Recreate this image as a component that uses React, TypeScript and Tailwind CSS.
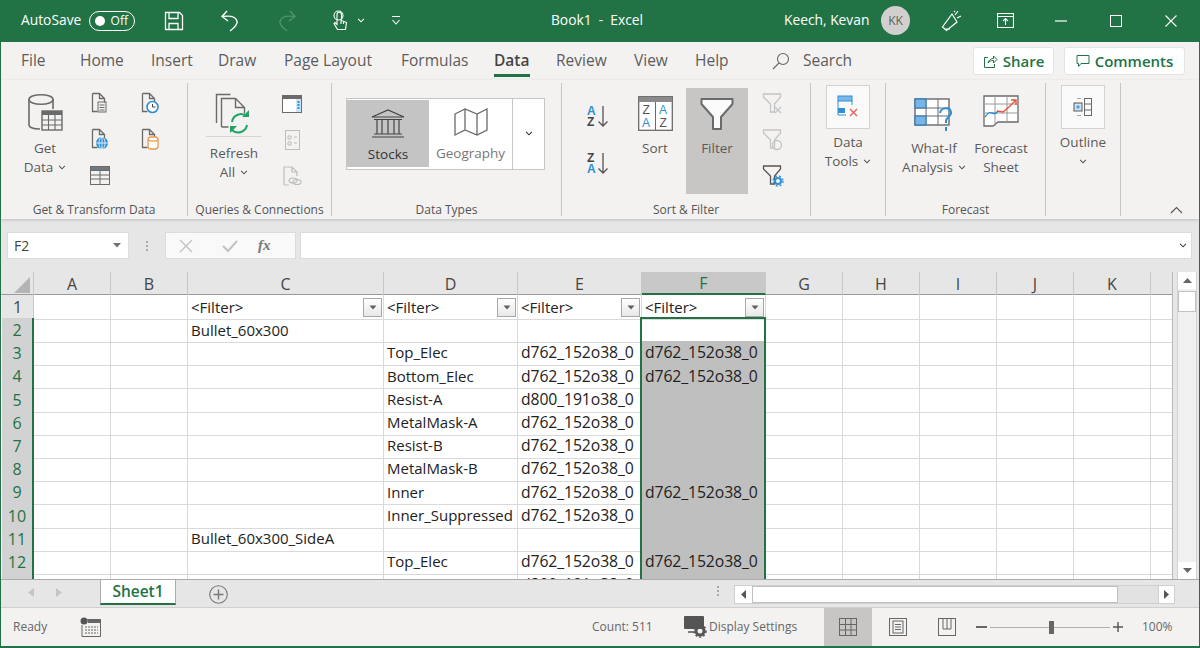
import React from "react";

const G = "#6a6a6a";
const BL = "#2e8fd6";

function Chev({ c = "#555", s = 8 }: { c?: string; s?: number }) {
  return (
    <svg width={s} height={s * 0.6} viewBox="0 0 8 5" className="inline-block">
      <path d="M1 1l3 3 3-3" fill="none" stroke={c} strokeWidth="1.1" />
    </svg>
  );
}

function Doc({ c = G, children }: { c?: string; children?: React.ReactNode }) {
  return (
    <svg width="24" height="24" viewBox="0 0 24 24">
      <path d="M4.5 2.5h7l5 5v4M11.5 2.5v5h5M4.5 2.5v18h5" fill="none" stroke={c} strokeWidth="1.3" />
      {children}
    </svg>
  );
}

function GetDataIcon() {
  return (
    <svg width="38" height="40" viewBox="0 0 38 40">
      <path d="M3 6v26c0 2.5 5 4 11 4M27 6v10" fill="none" stroke={G} strokeWidth="1.6" />
      <ellipse cx="15" cy="6.5" rx="12" ry="4.8" fill="#f3f2f1" stroke={G} strokeWidth="1.6" />
      <rect x="16" y="18" width="20" height="19" fill="#f3f2f1" stroke={G} strokeWidth="1.4" />
      <rect x="16" y="18" width="20" height="4" fill={G} />
      <path d="M16 27h20M16 32h20M22.5 22v15M29 22v15" stroke={G} strokeWidth="1.1" />
    </svg>
  );
}

function RefreshIcon() {
  return (
    <svg width="38" height="42" viewBox="0 0 38 42">
      <path d="M1.5 30V1.5h14" fill="none" stroke={G} strokeWidth="1.4" />
      <path d="M6.5 34V5.5h14l9 9v6M20.5 5.5v9h9M6.5 34h7" fill="#f3f2f1" stroke={G} strokeWidth="1.4" />
      <path d="M17 29a9 9 0 0 1 15-5.5M32 32a9 9 0 0 1-15 5" fill="none" stroke="#21a366" strokeWidth="2" />
      <path d="M34 17v7h-7zM15 40v-7h7z" fill="#21a366" />
    </svg>
  );
}

function FilterFunnel({ s = 34, c = G }: { s?: number; c?: string }) {
  return (
    <svg width={s} height={s} viewBox="0 0 34 34">
      <path d="M1.5 2h31v5L21 20v12h-8V20L1.5 7z" fill="#fbfbfb" stroke={c} strokeWidth="2" strokeLinejoin="round" />
    </svg>
  );
}

function SmallFunnel({ c, children }: { c: string; children?: React.ReactNode }) {
  return (
    <svg width="24" height="24" viewBox="0 0 24 24">
      <path d="M3.5 2h17v3l-6 7v8h-4v-8l-7-7z" fill="none" stroke={c} strokeWidth="1.3" />
      {children}
    </svg>
  );
}

function Sm({ children }: { children: React.ReactNode }) {
  return <div className="flex h-[24px] w-[24px] items-center justify-center">{children}</div>;
}

function Large({ icon, lines, w, top, chev }: { icon: React.ReactNode; lines: string[]; w: string; top: string; chev?: boolean }) {
  return (
    <div className={"flex flex-col items-center " + w}>
      <div className={"flex items-end justify-center " + top}>{icon}</div>
      <div className="text-center text-[13.5px] leading-[19px] whitespace-nowrap text-[#5a5a5a]">
        {lines.map((l, i) => (
          <div key={l} className="flex h-[19px] items-center justify-center">
            {l}
            {chev && i === lines.length - 1 && (
              <span className="ml-[5px] flex">
                <Chev />
              </span>
            )}
          </div>
        ))}
      </div>
    </div>
  );
}

function Group({ w, label, children }: { w: string; label: string; children: React.ReactNode }) {
  return (
    <div className={"flex h-[133px] flex-col border-r border-[#c8c6c4] " + w}>
      <div className="flex min-h-0 flex-1 items-start">{children}</div>
      <div className="h-[20px] pt-[5px] text-center text-[12px] leading-[18px] whitespace-nowrap text-[#555]">{label}</div>
    </div>
  );
}

function BoxBtn({ children }: { children: React.ReactNode }) {
  return <div className="flex h-[44px] w-[44px] items-center justify-center border border-[#d4d2d0] bg-[#fafafa]">{children}</div>;
}

const tabs = ["File", "Home", "Insert", "Draw", "Page Layout", "Formulas", "Data", "Review", "View", "Help"];
const tabW = ["w-[59px]", "w-[71px]", "w-[67px]", "w-[66px]", "w-[117px]", "w-[93px]", "w-[62px]", "w-[78px]", "w-[61px]", "w-[77px]"];

const D = "d762_152o38_0";
const rows: [number, string, string, string, string][] = [
  [2, "Bullet_60x300", "", "", ""],
  [3, "", "Top_Elec", D, D],
  [4, "", "Bottom_Elec", D, D],
  [5, "", "Resist-A", "d800_191o38_0", ""],
  [6, "", "MetalMask-A", D, ""],
  [7, "", "Resist-B", D, ""],
  [8, "", "MetalMask-B", D, ""],
  [9, "", "Inner", D, D],
  [10, "", "Inner_Suppressed", D, ""],
  [11, "Bullet_60x300_SideA", "", "", ""],
  [12, "", "Top_Elec", D, D],
  [13, "", "Resist-A", "d800_191o38_0", ""],
];
const cols = "grid grid-cols-[32px_77px_77px_196px_134px_124px_124px_77px_77px_77px_77px_77px_22px] pl-px";
const gl = "border-r border-b border-[#d9d9d9]";
const num = "text-[15.75px] tracking-[-0.1px]";

function FilterCell() {
  return (
    <div className={"flex items-center justify-between pl-[3px] pr-[1px] " + gl}>
      <span>{"<Filter>"}</span>
      <span className="flex h-[19px] w-[19px] items-center justify-center border border-[#a8a8a8] bg-gradient-to-b from-white to-[#e8e8e8]">
        <svg width="8" height="5" viewBox="0 0 8 5"><path d="M0.5 0.5h7L4 4.5z" fill="#606060" /></svg>
      </span>
    </div>
  );
}

function SortGlyph({ top, bottom }: { top: string; bottom: string }) {
  return (
    <svg className="overflow-visible" width="24" height="23" viewBox="0 0 24 23" fontFamily="'Liberation Sans',sans-serif">
      <text x="1" y="10" fontSize="12" fontWeight="700" fill={top === "A" ? BL : "#444"}>{top}</text>
      <text x="1" y="21" fontSize="12" fontWeight="700" fill={bottom === "A" ? BL : "#444"}>{bottom}</text>
      <path d="M17 1v20M12.5 16.5L17 21l4.5-4.5" fill="none" stroke="#555" strokeWidth="1.3" />
    </svg>
  );
}

export default function App() {
  return (
    <div className="flex h-[648px] w-[1200px] flex-col overflow-hidden border-x border-b-2 border-[#217346] bg-[#e6e6e6] [font-family:'Open_Sans','Noto_Sans',sans-serif]">
      {/* Title bar */}
      <div className="flex h-[42px] shrink-0 items-center bg-[#217346] pb-[1px] text-[13.8px] text-white">
        <span className="ml-[20px] w-[68px]">AutoSave</span>
        <div className="flex h-[20px] w-[46px] items-center justify-between rounded-full border border-white pl-[5px] pr-[6px]">
          <span className="h-[10px] w-[10px] rounded-full bg-white" />
          <span className="text-[12px]">Off</span>
        </div>
        <svg className="ml-[29px]" width="20" height="20" viewBox="0 0 20 20" fill="none" stroke="#fff" strokeWidth="1.3">
          <path d="M1.5 1.5h14l3 3v14h-17z" />
          <path d="M5 1.5v6h9v-6M5 18.5v-6h9v6" />
        </svg>
        <svg className="ml-[36px]" width="20" height="22" viewBox="0 0 20 22" fill="none" stroke="#fff" strokeWidth="1.4">
          <path d="M7 1L2 6.5 8 11M2.5 6.5c7-1 13 0 14.5 4.5 1 3.5-3 7-7 10" />
        </svg>
        <svg className="ml-[37px]" width="20" height="22" viewBox="0 0 20 22" fill="none" stroke="#4d9470" strokeWidth="1.4">
          <path d="M13 1l5 5.5L12 11M17.5 6.5c-7-1-13 0-14.5 4.5-1 3.5 3 7 7 10" />
        </svg>
        <svg className="ml-[36px]" width="15" height="22" viewBox="0 0 15 22" fill="none" stroke="#fff" strokeWidth="1.1">
          <circle cx="5.5" cy="5.5" r="4.5" />
          <path d="M4 4.5v10l-2-2-1 1 3.5 6h8l1-7-5-2V4.5a1 1 0 0 0-4.5 0zM8 10v4M10.5 11v3" />
        </svg>
        <span className="ml-[9px] flex"><Chev c="#fff" /></span>
        <svg className="ml-[26px]" width="10" height="11" viewBox="0 0 10 11" fill="none" stroke="#fff" strokeWidth="1.1">
          <path d="M1 1.5h8M1.5 5l3.5 4 3.5-4" />
        </svg>
        <span className="ml-[146px] w-[100px] text-center whitespace-pre">Book1  -  Excel</span>
        <span className="ml-[137px] w-[86px] whitespace-nowrap">Keech, Kevan</span>
        <span className="ml-[11px] flex h-[29px] w-[29px] items-center justify-center rounded-full bg-[#d2d0ce] text-[12px] text-[#5f5f5f]">KK</span>
        <svg className="ml-[31px]" width="21" height="22" viewBox="0 0 21 22" fill="none" stroke="#fff" strokeWidth="1.2">
          <path d="M11 4L1.5 17l4 3.5L16 12zM3 19h6M14 5l3-4M16 8l4-2M13 2l1-1" />
        </svg>
        <svg className="ml-[35px]" width="17" height="15" viewBox="0 0 17 15" fill="none" stroke="#fff" strokeWidth="1.1">
          <rect x="0.5" y="0.5" width="16" height="14" />
          <path d="M0.5 3.5h16M8.5 12V6M6 8l2.5-2.5L11 8" />
        </svg>
        <svg className="ml-[41px]" width="12" height="2" viewBox="0 0 12 2"><path d="M0 1h12" stroke="#fff" strokeWidth="1.2" /></svg>
        <svg className="ml-[43px]" width="12" height="12" viewBox="0 0 12 12"><rect x="0.5" y="0.5" width="11" height="11" fill="none" stroke="#fff" /></svg>
        <svg className="ml-[43px]" width="12" height="12" viewBox="0 0 12 12"><path d="M0.5 0.5l11 11M11.5 0.5l-11 11" stroke="#fff" strokeWidth="1.1" /></svg>
      </div>

      {/* Tabs */}
      <div className="flex h-[38px] shrink-0 items-center bg-[#f3f2f1] pl-[20px] text-[15.5px] text-[#5c5c5c]">
        {tabs.map((t, i) => (
          <div key={t} className={"relative -mt-[1px] shrink-0 whitespace-nowrap " + tabW[i] + (t === "Data" ? " font-semibold text-[#444]" : "")}>
            {t}
            {t === "Data" && <span className="absolute -bottom-[5px] left-0 h-[3px] w-[36px] bg-[#217346]" />}
          </div>
        ))}
        <svg className="-mt-[1px] shrink-0" width="18" height="18" viewBox="0 0 18 18" fill="none" stroke="#666" strokeWidth="1.1">
          <circle cx="11" cy="7" r="5.5" /><path d="M7 11l-6 6" />
        </svg>
        <span className="-mt-[1px] ml-[13px] w-[170px] shrink-0">Search</span>
        <div className="flex h-[28px] w-[81px] shrink-0 items-center justify-center gap-[5px] rounded-[3px] border border-[#e4e4e4] bg-white text-[15px] font-semibold text-[#217346]">
          <svg width="15" height="15" viewBox="0 0 15 15" fill="none" stroke="#217346" strokeWidth="1">
            <path d="M5 3.5H1.5v10h10V10M5 9c.5-3 3-4.5 5.5-4.5V2L14 5.5 10.5 9V6.5C8 6.5 6 7.5 5 9z" />
          </svg>
          Share
        </div>
        <div className="ml-[10px] flex h-[28px] w-[121px] shrink-0 items-center justify-center gap-[5px] rounded-[3px] border border-[#e4e4e4] bg-white text-[15px] font-semibold text-[#217346]">
          <svg width="14" height="14" viewBox="0 0 14 14" fill="none" stroke="#217346" strokeWidth="1">
            <path d="M1 1.5h12v8H5l-2.5 3v-3H1z" />
          </svg>
          Comments
        </div>
      </div>

      {/* Ribbon */}
      <div className="flex h-[139px] shrink-0 items-start bg-[#f3f2f1] pt-[3px] shadow-[0_1px_3px_rgba(0,0,0,0.18)]">
        <Group w="w-[187px]" label="Get & Transform Data">
          <div className="ml-[19px] flex"><Large w="w-[50px]" top="h-[56px] pb-[6px]" icon={<GetDataIcon />} lines={["Get", "Data"]} chev /></div>
          <div className="ml-[18px] mt-[8px] flex flex-col gap-[12px]">
            <Sm><Doc><rect x="10" y="11" width="8" height="10" fill="none" stroke={G} /><path d="M11.5 14h5M11.5 16.5h5M11.5 19h5" stroke={G} /></Doc></Sm>
            <Sm><Doc><circle cx="14" cy="16" r="6" fill={BL} /><path d="M8 16h12M14 10v12" stroke="#fff" strokeWidth="0.8" /><ellipse cx="14" cy="16" rx="3" ry="6" fill="none" stroke="#fff" strokeWidth="0.8" /></Doc></Sm>
            <Sm>
              <svg width="20" height="19" viewBox="0 0 20 19" fill="none" stroke={G}>
                <rect x="0.5" y="0.5" width="19" height="18" /><path d="M0.5 9h19M0.5 13h19M10 5v14" />
                <path d="M0.5 0.5h19v4h-19z" fill="#777" />
                <path d="M4 2.5l1.5 1.5 1.5-1.5M13 2.5l1.5 1.5 1.5-1.5" stroke={BL} />
              </svg>
            </Sm>
          </div>
          <div className="ml-[26px] mt-[8px] flex flex-col gap-[12px]">
            <Sm><Doc><circle cx="14.5" cy="16" r="5.5" fill="#fff" stroke={BL} strokeWidth="1.6" /><path d="M14.5 13v3h3" fill="none" stroke="#444" /></Doc></Sm>
            <Sm><Doc><rect x="10" y="10" width="10" height="12" rx="3" fill="#fff" stroke="#ed9a4a" strokeWidth="1.3" /><path d="M10 13c2 1.5 8 1.5 10 0" fill="none" stroke="#ed9a4a" strokeWidth="1.2" /></Doc></Sm>
          </div>
        </Group>

        <Group w="w-[144px]" label="Queries & Connections">
          <div className="ml-[16px] flex flex-col">
            <Large
              w="w-[60px]"
              top="h-[61px] pb-[7px]"
              icon={
                <div className="flex h-[54px] w-[56px] items-start justify-center border-b border-[#d8d6d4] pt-[10px]">
                  <RefreshIcon />
                </div>
              }
              lines={["Refresh", "All"]}
              chev
            />
          </div>
          <div className="ml-[16px] mt-[9px] flex flex-col gap-[12px]">
            <Sm>
              <svg width="20" height="18" viewBox="0 0 20 18"><rect x="0.5" y="0.5" width="19" height="17" fill="#fff" stroke={G} /><rect x="1" y="1" width="18" height="3" fill={G} /><rect x="14" y="4" width="5" height="13" fill="#cfe5f6" /><path d="M16.5 6v9" stroke={BL} strokeWidth="2" strokeDasharray="2 1" /></svg>
            </Sm>
            <Sm>
              <svg width="15" height="20" viewBox="0 0 15 20" fill="none" stroke="#bdbdbd"><rect x="0.5" y="0.5" width="14" height="19" /><path d="M3 6h3v3H3zM3 12h3v3H3zM9 7h3M9 13h3" /></svg>
            </Sm>
            <Sm>
              <svg width="20" height="20" viewBox="0 0 20 20" fill="none" stroke="#bdbdbd" strokeWidth="1.2"><path d="M2 19V1h8l5 5v4M10 1v5h5M2 19h5" /><ellipse cx="11" cy="14.5" rx="4" ry="2.5" /><ellipse cx="15" cy="16" rx="4" ry="2.5" /></svg>
            </Sm>
          </div>
        </Group>

        <Group w="w-[230px]" label="Data Types">
          <div className="ml-[14px] mt-[15px] flex h-[72px] w-[199px] border border-[#c8c6c4] bg-white">
            <div className="mt-[1px] flex h-[67px] w-[82px] flex-col items-center bg-[#c4c4c4] pt-[8px]">
              <svg width="34" height="30" viewBox="0 0 34 30" fill="none" stroke="#444" strokeWidth="1.2">
                <path d="M1 9L17 2l16 7zM3 11.5h28M6 12v14M11 12v14M17 12v14M23 12v14M28 12v14M3 26h28M1 29h32" />
              </svg>
              <span className="mt-[7px] text-[13.5px] leading-[19px] text-[#333]">Stocks</span>
            </div>
            <div className="flex w-[83px] flex-col items-center pt-[8px]">
              <svg width="34" height="30" viewBox="0 0 34 30" fill="none" stroke={G} strokeWidth="1.3">
                <path d="M1 7l10-5 12 5 10-5v21l-10 5-12-5-10 5zM11 2v21M23 7v21" />
              </svg>
              <span className="mt-[7px] text-[13.5px] leading-[19px] whitespace-nowrap text-[#777]">Geography</span>
            </div>
            <div className="flex flex-1 items-start justify-center border-l border-[#c8c6c4] pt-[32px]"><Chev c="#333" /></div>
          </div>
        </Group>

        <Group w="w-[249px]" label="Sort & Filter">
          <div className="ml-[24px] mt-[22px] flex w-[26px] flex-col gap-[24px]">
            <SortGlyph top="A" bottom="Z" />
            <SortGlyph top="Z" bottom="A" />
          </div>
          <div className="ml-[12px]">
            <Large
              w="w-[62px]"
              top="h-[56px] pb-[8px]"
              icon={
                <svg width="35" height="35" viewBox="0 0 35 35" fontFamily="'Liberation Sans',sans-serif">
                  <rect x="0.7" y="0.7" width="33.6" height="33.6" fill="#fff" stroke={G} strokeWidth="1.3" />
                  <rect x="1" y="1" width="33" height="5" fill="#8a8a8a" />
                  <path d="M17.5 6v28" stroke={G} />
                  <text x="4.5" y="18" fontSize="12" fill="#555">Z</text>
                  <text x="4" y="31" fontSize="12" fill={BL}>A</text>
                  <text x="21" y="18" fontSize="12" fill={BL}>A</text>
                  <text x="21.5" y="31" fontSize="12" fill="#555">Z</text>
                </svg>
              }
              lines={["Sort"]}
            />
          </div>
          <div className="mt-[5px] h-[106px] w-[62px] bg-[#c8c6c4]">
            <Large w="w-[62px]" top="h-[51px] pb-[8px]" icon={<FilterFunnel />} lines={["Filter"]} />
          </div>
          <div className="ml-[12px] mt-[9px] flex flex-col gap-[12px]">
            <Sm><SmallFunnel c="#c4c4c4"><path d="M15 15l6 6M21 15l-6 6" stroke="#c4c4c4" strokeWidth="1.2" /></SmallFunnel></Sm>
            <Sm><SmallFunnel c="#c4c4c4"><circle cx="17" cy="17" r="4.5" fill="none" stroke="#c4c4c4" strokeWidth="1.3" /></SmallFunnel></Sm>
            <Sm><SmallFunnel c="#555"><circle cx="18" cy="17" r="3" fill="none" stroke={BL} strokeWidth="2" /><circle cx="18" cy="17" r="5" fill="none" stroke={BL} strokeWidth="1.3" strokeDasharray="2 2" /></SmallFunnel></Sm>
          </div>
        </Group>

        <Group w="w-[75px]" label="">
          <div className="flex w-full flex-col items-center pt-[2px]">
            <BoxBtn>
              <svg width="24" height="24" viewBox="0 0 24 24" fill="none">
                <rect x="2" y="1" width="14" height="5" fill="#7db9e8" stroke={BL} />
                <path d="M2 6v14h8M16 6v4" stroke={BL} />
                <rect x="2" y="13" width="7" height="5" fill={BL} />
                <path d="M14 14l7 7M21 14l-7 7" stroke="#e8605a" strokeWidth="1.4" />
              </svg>
            </BoxBtn>
            <div className="mt-[4px] text-center text-[13.5px] leading-[19px] text-[#5a5a5a]">
              <div>Data</div>
              <div className="flex h-[19px] items-center">Tools<span className="ml-[5px] flex"><Chev /></span></div>
            </div>
          </div>
        </Group>

        <Group w="w-[160px]" label="Forecast">
          <div className="ml-[13px]">
            <Large
              w="w-[70px]"
              top="h-[56px] pb-[7px]"
              chev
              icon={
                <svg width="40" height="34" viewBox="0 0 40 34" fill="none">
                  <rect x="1" y="1" width="34" height="26" stroke={G} strokeWidth="1.4" fill="#fff" />
                  <path d="M1 10h34M1 18h34M12 1v26M24 1v26" stroke={G} />
                  <rect x="1" y="1" width="11" height="9" fill="#78b4e6" stroke="#1f75bd" />
                  <rect x="1" y="18" width="11" height="9" fill="#78b4e6" stroke="#1f75bd" />
                  <path d="M26 15c1-6 10-6 11-1 1 4-5 5-5 9v2M32 29v4" stroke={BL} strokeWidth="2" />
                </svg>
              }
              lines={["What-If", "Analysis"]}
            />
          </div>
          <div>
            <Large
              w="w-[64px]"
              top="h-[56px] pb-[12px]"
              icon={
                <svg width="36" height="32" viewBox="0 0 36 32" fill="none">
                  <path d="M1 27V1h34v26H15l-5 4H1z" stroke={G} strokeWidth="1.3" fill="#fff" />
                  <path d="M1 9h34M1 18h34M12 1v30M24 1v26" stroke="#999" />
                  <path d="M2 22c2-3 5-5 7-4s4 1 6-2" stroke={BL} strokeWidth="1.4" />
                  <path d="M14 16l6 1 6-5 6-6M28 5h5v5" stroke="#e8503a" strokeWidth="1.4" />
                </svg>
              }
              lines={["Forecast", "Sheet"]}
            />
          </div>
        </Group>

        <Group w="w-[75px]" label="">
          <div className="flex w-full flex-col items-center pt-[2px]">
            <BoxBtn>
              <svg width="20" height="20" viewBox="0 0 20 20" fill="none" stroke={G}>
                <rect x="1" y="6" width="8" height="8" fill="#cfe5f6" stroke="#555" />
                <path d="M3 10h4M5 8v4" stroke={BL} />
                <path d="M4 1.5h4M4 18.5h4" stroke="#aaa" />
                <rect x="11.5" y="1.5" width="7" height="17" />
                <path d="M11.5 7h7M11.5 13h7" />
              </svg>
            </BoxBtn>
            <div className="mt-[4px] text-center text-[13.5px] leading-[19px] text-[#5a5a5a]">
              <div>Outline</div>
              <div className="flex h-[19px] items-center justify-center"><Chev /></div>
            </div>
          </div>
        </Group>

        <div className="flex h-[133px] flex-1 items-end justify-end pb-[2px] pr-[16px]">
          <svg width="13" height="8" viewBox="0 0 13 8"><path d="M1 7l5.5-5.5L12 7" fill="none" stroke="#555" strokeWidth="1.1" /></svg>
        </div>
      </div>

      {/* Formula bar */}
      <div className="flex h-[53px] shrink-0 items-start pl-[6px] pt-[13px]">
        <div className="flex h-[27px] w-[122px] items-center justify-between border border-[#dcdcdc] bg-white pl-[6px] pr-[7px] text-[14px] text-[#444]">
          F2
          <svg width="8" height="5" viewBox="0 0 8 5"><path d="M0 0h8L4 4.5z" fill="#707070" /></svg>
        </div>
        <div className="ml-[16px] flex h-[27px] w-[3px] flex-col items-center justify-center gap-[2px]">
          <span className="h-[2px] w-[2px] bg-[#aaa]" /><span className="h-[2px] w-[2px] bg-[#aaa]" /><span className="h-[2px] w-[2px] bg-[#aaa]" />
        </div>
        <div className="ml-[17px] flex h-[27px] w-[131px] items-center border border-[#dcdcdc] bg-[#f9f9f9] pl-[13px]">
          <svg width="14" height="14" viewBox="0 0 14 14"><path d="M1 1l12 12M13 1L1 13" stroke="#c2c2c2" strokeWidth="1.4" /></svg>
          <svg className="ml-[29px]" width="16" height="14" viewBox="0 0 16 14"><path d="M1 7l5 5L15 2" fill="none" stroke="#c2c2c2" strokeWidth="2" /></svg>
          <span className="ml-[20px] font-['Liberation_Serif',serif] text-[15px] font-bold italic leading-none text-[#777]">fx</span>
        </div>
        <div className="ml-[4px] flex h-[27px] w-[892px] items-center justify-end border border-[#dcdcdc] bg-white pr-[4px]">
          <Chev c="#444" />
        </div>
      </div>

      {/* Sheet + scrollbar */}
      <div className="flex h-[307px] shrink-0">
        <div className="relative h-[307px] w-[1172px] overflow-hidden border-r border-[#b8b8b8] bg-white text-[15px] text-[#222]">
          <div className={cols + " h-[23px] border-b border-[#9a9a9a] bg-[#e6e6e6] text-[16px] text-[#444]"}>
            <div className="flex items-end justify-end border-r border-[#c8c8c8] pb-[3px] pr-[3px]">
              <svg width="16" height="16" viewBox="0 0 16 16"><path d="M16 0v16H0z" fill="#b4b4b4" /></svg>
            </div>
            {["A", "B", "C", "D", "E", "F", "G", "H", "I", "J", "K", ""].map((c) => (
              <div key={c} className={"flex items-center justify-center border-r border-[#c8c8c8] " + (c === "F" ? "h-[23px] border-b-2 border-b-[#217346] bg-[#c8c8c8] text-[#217346]" : "")}>{c}</div>
            ))}
          </div>
          <div className={cols + " h-[23px]"}>
            <div className="flex items-center justify-center border-r border-b border-[#c8c8c8] bg-[#e6e6e6] text-[16px] text-[#444]">1</div>
            <div className={gl} /><div className={gl} />
            <FilterCell /><FilterCell /><FilterCell /><FilterCell />
            <div className={gl} /><div className={gl} /><div className={gl} /><div className={gl} /><div className={gl} /><div className={gl} />
          </div>
          {rows.map(([n, c, d, e, f]) => (
            <div key={n} className={cols + " h-[23.2px]"}>
              <div className="flex items-center justify-center border-r-2 border-b border-r-[#217346] border-b-[#bdbdbd] bg-[#d2d2d2] text-[16px] text-[#217346]">{n}</div>
              <div className={gl} /><div className={gl} />
              <div className={"flex items-center whitespace-nowrap pl-[3px] " + gl}>{c}</div>
              <div className={"flex items-center whitespace-nowrap pb-[1px] pl-[3px] " + gl}>{d}</div>
              <div className={"flex items-center whitespace-nowrap pl-[3px] " + num + " " + gl}>{e}</div>
              <div className={"flex items-center whitespace-nowrap pl-[3px] " + num + " " + (n === 2 ? gl : "border-r border-b border-[#adadad] bg-[#bfbfbf]")}>{f}</div>
              <div className={gl} /><div className={gl} /><div className={gl} /><div className={gl} /><div className={gl} /><div className={gl} />
            </div>
          ))}
          <div className="absolute left-[639px] top-[45px] h-[300px] w-[126px] border-2 border-[#217346]" />
        </div>
        <div className="ml-[4px] flex w-[20px] flex-col border-x border-[#d4d4d4] bg-[#f0f0f0]">
          <div className="flex h-[17px] items-center justify-center bg-white">
            <svg width="9" height="5" viewBox="0 0 9 5"><path d="M0 5h9L4.5 0z" fill="#666" /></svg>
          </div>
          <div className="mt-[2px] h-[21px] border border-[#c0c0c0] bg-white" />
          <div className="flex-1" />
          <div className="flex h-[17px] items-center justify-center bg-white">
            <svg width="9" height="5" viewBox="0 0 9 5"><path d="M0 0h9L4.5 5z" fill="#666" /></svg>
          </div>
        </div>
      </div>

      {/* Sheet tabs */}
      <div className="flex h-[28px] shrink-0 items-start border-t border-[#ababab]">
        <svg className="ml-[27px] mt-[8px]" width="6" height="9" viewBox="0 0 6 9"><path d="M6 0v9L0 4.5z" fill="#c4c4c4" /></svg>
        <svg className="ml-[22px] mt-[8px]" width="6" height="9" viewBox="0 0 6 9"><path d="M0 0v9l6-4.5z" fill="#c4c4c4" /></svg>
        <div className="-mt-px ml-[38px] flex h-[26px] w-[76px] items-center justify-center border-x border-t border-b-2 border-[#ababab] border-b-[#217346] bg-white text-[15.5px] font-semibold text-[#217346]">Sheet1</div>
        <svg className="ml-[33px] mt-[5px]" width="19" height="19" viewBox="0 0 19 19" fill="none" stroke="#777" strokeWidth="1.1">
          <circle cx="9.5" cy="9.5" r="8.8" /><path d="M9.5 4.5v10M4.5 9.5h10" strokeWidth="1.4" />
        </svg>
        <div className="ml-[489px] mt-[6px] flex w-[3px] flex-col gap-[2px]">
          <span className="h-[2px] w-[2px] bg-[#aaa]" /><span className="h-[2px] w-[2px] bg-[#aaa]" /><span className="h-[2px] w-[2px] bg-[#aaa]" />
        </div>
        <div className="ml-[14px] mt-[5px] flex h-[19px] w-[441px] border border-[#d0d0d0] bg-[#e2e2e2]">
          <div className="flex w-[17px] items-center justify-center bg-white"><svg width="5" height="9" viewBox="0 0 5 9"><path d="M5 0v9L0 4.5z" fill="#555" /></svg></div>
          <div className="w-[366px] border border-[#c0c0c0] bg-white" />
          <div className="flex-1" />
          <div className="flex w-[16px] items-center justify-center border-l border-[#d0d0d0] bg-white"><svg width="5" height="9" viewBox="0 0 5 9"><path d="M0 0v9l5-4.5z" fill="#555" /></svg></div>
        </div>
      </div>

      {/* Status */}
      <div className="flex min-h-0 flex-1 items-center border-t border-[#d0d0d0] bg-[#f3f2f1] text-[12px] text-[#666]">
        <span className="ml-[12px] w-[67px]">Ready</span>
        <svg width="21" height="20" viewBox="0 0 21 20" fill="none" stroke="#666">
          <circle cx="4" cy="4" r="3.5" fill="#555" stroke="none" /><path d="M6 2.5h14.5v17H2V8" />
          <path d="M8 2.5h12.5v3H8z" fill="#666" />
          <path d="M5 10h13M5 13h13M5 16h13" strokeDasharray="2 1" />
        </svg>
        <span className="ml-[491px] w-[92px]">Count: 511</span>
        <svg width="24" height="22" viewBox="0 0 24 22">
          <rect x="0" y="0" width="20" height="13" rx="1" fill="#555" />
          <path d="M4 16h6" stroke="#555" strokeWidth="1.5" />
          <circle cx="16" cy="15" r="4" fill="none" stroke="#555" strokeWidth="3" />
          <circle cx="16" cy="15" r="6" fill="none" stroke="#555" strokeWidth="1.5" strokeDasharray="2 2" />
        </svg>
        <span className="ml-[1px] w-[115px] whitespace-nowrap">Display Settings</span>
        <div className="flex h-full w-[48px] items-center justify-center bg-[#c8c6c4]">
          <svg width="18" height="18" viewBox="0 0 18 18" fill="none" stroke="#666"><rect x="0.5" y="0.5" width="17" height="17" /><path d="M6.5 0v18M12 0v18M0 6.5h18M0 12h18" /></svg>
        </div>
        <div className="flex w-[52px] justify-center">
          <svg width="18" height="18" viewBox="0 0 18 18" fill="none" stroke="#666"><rect x="0.5" y="0.5" width="17" height="17" /><rect x="4" y="3" width="10" height="12" /><path d="M6 6.5h6M6 9h6M6 11.5h6" /></svg>
        </div>
        <div className="flex w-[45px] justify-center">
          <svg width="18" height="18" viewBox="0 0 18 18" fill="none" stroke="#666"><rect x="0.5" y="0.5" width="17" height="17" /><path d="M5 0v11h8V0M9 0v11" /></svg>
        </div>
        <span className="ml-[7px] h-[2px] w-[11px] bg-[#666]" />
        <div className="relative ml-[3px] h-[1px] w-[120px] bg-[#b0b0b0]">
          <span className="absolute left-[59px] -top-[6px] h-[13px] w-[5px] bg-[#666]" />
        </div>
        <svg className="ml-[3px]" width="10" height="10" viewBox="0 0 10 10"><path d="M5 0v10M0 5h10" stroke="#555" strokeWidth="1.4" /></svg>
        <span className="ml-[19px]">100%</span>
      </div>
    </div>
  );
}
